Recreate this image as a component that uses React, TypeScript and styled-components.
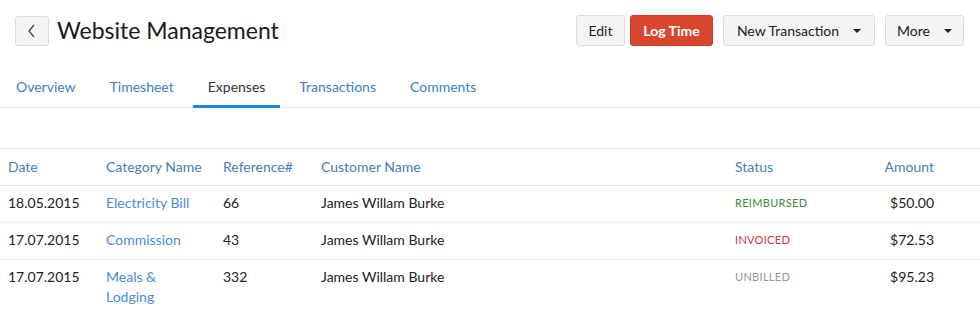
import React from 'react';
import styled, { createGlobalStyle } from 'styled-components';

const GlobalStyle = createGlobalStyle`
  html, body {
    margin: 0;
    padding: 0;
    background: #ffffff;
    font-family: Lato, "Open Sans", sans-serif;
    color: #222222;
  }
`;

const Page = styled.div`
  width: 980px;
`;

const Header = styled.div`
  display: flex;
  align-items: center;
  justify-content: space-between;
  padding: 15px 16px 0 15px;
  height: 31px;
`;

const TitleGroup = styled.div`
  display: flex;
  align-items: center;
  gap: 8px;
`;

const BackButton = styled.button`
  width: 34px;
  height: 30px;
  display: flex;
  align-items: center;
  justify-content: center;
  background: #f4f4f4;
  border: 1px solid #dcdcdc;
  border-radius: 3px;
  padding: 0;
`;

const Title = styled.h1`
  margin: 0 0 2px;
  font-size: 23px;
  font-weight: 400;
  color: #1a1a1a;
`;

const Actions = styled.div`
  display: flex;
  align-items: center;
`;

const Btn = styled.button<{ $primary?: boolean; $gap?: number; $width: number }>`
  height: 31px;
  width: ${(p) => p.$width}px;
  margin-left: ${(p) => p.$gap ?? 0}px;
  display: flex;
  align-items: center;
  justify-content: center;
  gap: 14px;
  padding: 0;
  font-family: Lato, sans-serif;
  font-size: 14px;
  font-weight: ${(p) => (p.$primary ? 700 : 400)};
  color: ${(p) => (p.$primary ? '#ffffff' : '#222222')};
  background: ${(p) => (p.$primary ? '#d9462e' : '#f4f4f4')};
  border: 1px solid ${(p) => (p.$primary ? '#cc3d26' : '#dcdcdc')};
  border-radius: 3px;
`;

const Caret = styled.span`
  width: 0;
  height: 0;
  border-left: 4px solid transparent;
  border-right: 4px solid transparent;
  border-top: 4px solid #222222;
`;

const Tabs = styled.div`
  display: flex;
  gap: 4px;
  margin-top: 29px;
  padding-left: 1px;
  border-bottom: 1px solid #e6e6e6;
`;

const Tab = styled.div<{ $active?: boolean }>`
  padding: 0 15px;
  height: 30px;
  line-height: 24px;
  font-size: 14px;
  color: ${(p) => (p.$active ? '#333333' : '#3b80c6')};
  border-bottom: 3px solid ${(p) => (p.$active ? '#1f86da' : 'transparent')};
  margin-bottom: -1px;
`;

const Table = styled.table`
  margin-top: 40px;
  width: 980px;
  border-collapse: collapse;
  table-layout: fixed;
  border-top: 1px solid #e2e2e2;
  font-size: 14px;
`;

const Th = styled.th<{ $right?: boolean; $w: number }>`
  box-sizing: border-box;
  width: ${(p) => p.$w}px;
  text-align: ${(p) => (p.$right ? 'right' : 'left')};
  font-weight: 400;
  color: #4a7db1;
  height: 37px;
  padding: 0 ${(p) => (p.$right ? 46 : 8)}px 1px 8px;
  border-bottom: 1px solid #e2e2e2;
`;

const Td = styled.td<{ $right?: boolean }>`
  text-align: ${(p) => (p.$right ? 'right' : 'left')};
  vertical-align: top;
  padding: 7px ${(p) => (p.$right ? 46 : 8)}px 9px 8px;
  line-height: 20px;
  border-bottom: 1px solid #ececec;
`;

const Row = styled.tr`
  &:last-child td {
    border-bottom: none;
  }
`;

const Link = styled.span`
  color: #4a8cd3;
`;

const Status = styled.span<{ $color: string }>`
  display: inline-block;
  vertical-align: top;
  line-height: 20px;
  font-size: 11px;
  letter-spacing: 0.3px;
  text-transform: uppercase;
  color: ${(p) => p.$color};
`;

const statusColors: Record<string, string> = {
  reimbursed: '#3d8a3a',
  invoiced: '#c8383d',
  unbilled: '#8a9ba3',
};

const expenses = [
  { date: '18.05.2015', category: 'Electricity Bill', ref: '66', customer: 'James Willam Burke', status: 'reimbursed', amount: '$50.00' },
  { date: '17.07.2015', category: 'Commission', ref: '43', customer: 'James Willam Burke', status: 'invoiced', amount: '$72.53' },
  { date: '17.07.2015', category: 'Meals & Lodging', ref: '332', customer: 'James Willam Burke', status: 'unbilled', amount: '$95.23' },
];

const tabs = ['Overview', 'Timesheet', 'Expenses', 'Transactions', 'Comments'];

export default function App() {
  return (
    <Page>
      <GlobalStyle />
      <Header>
        <TitleGroup>
          <BackButton aria-label="Back">
            <svg width="10" height="14" viewBox="0 0 10 14">
              <path d="M7 1 L2 7 L7 13" fill="none" stroke="#444" strokeWidth="1.3" />
            </svg>
          </BackButton>
          <Title>Website Management</Title>
        </TitleGroup>
        <Actions>
          <Btn $width={49}>Edit</Btn>
          <Btn $primary $width={83} $gap={5}>Log Time</Btn>
          <Btn $width={152} $gap={10}>
            New Transaction <Caret />
          </Btn>
          <Btn $width={79} $gap={10}>
            More <Caret />
          </Btn>
        </Actions>
      </Header>
      <Tabs>
        {tabs.map((t) => (
          <Tab key={t} $active={t === 'Expenses'}>
            {t}
          </Tab>
        ))}
      </Tabs>
      <Table>
        <thead>
          <tr>
            <Th $w={98}>Date</Th>
            <Th $w={117}>Category Name</Th>
            <Th $w={98}>Reference#</Th>
            <Th $w={414}>Customer Name</Th>
            <Th $w={127}>Status</Th>
            <Th $w={126} $right>Amount</Th>
          </tr>
        </thead>
        <tbody>
          {expenses.map((e, i) => (
            <Row key={i}>
              <Td>{e.date}</Td>
              <Td>
                <Link>{e.category}</Link>
              </Td>
              <Td>{e.ref}</Td>
              <Td>{e.customer}</Td>
              <Td>
                <Status $color={statusColors[e.status]}>{e.status}</Status>
              </Td>
              <Td $right>{e.amount}</Td>
            </Row>
          ))}
        </tbody>
      </Table>
    </Page>
  );
}
